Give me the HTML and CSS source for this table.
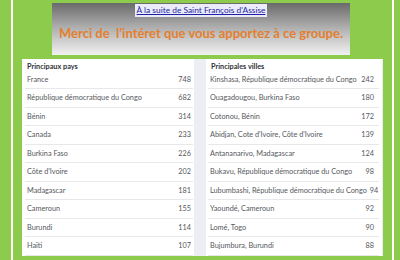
FILE: index.html
```html
<!DOCTYPE html>
<html lang="fr">
<head>
<meta charset="utf-8">
<link rel="stylesheet" href="styles.css">
</head>
<body>
<div class="frame">
  <div class="banner">
    <a class="link" href="#">À la suite de Saint François d'Assise</a>
    <div class="thanks">Merci de&nbsp; l’intéret que vous apportez à ce groupe.</div>
  </div>
  <div class="panel">
    <div class="card card-left">
      <div class="head">Principaux pays</div>
      <div class="row"><span>France</span><span>748</span></div>
      <div class="row"><span>République démocratique du Congo</span><span>682</span></div>
      <div class="row"><span>Bénin</span><span>314</span></div>
      <div class="row"><span>Canada</span><span>233</span></div>
      <div class="row"><span>Burkina Faso</span><span>226</span></div>
      <div class="row"><span>Côte d'Ivoire</span><span>202</span></div>
      <div class="row"><span>Madagascar</span><span>181</span></div>
      <div class="row"><span>Cameroun</span><span>155</span></div>
      <div class="row"><span>Burundi</span><span>114</span></div>
      <div class="row"><span>Haïti</span><span>107</span></div>
    </div>
    <div class="card card-right">
      <div class="head">Principales villes</div>
      <div class="row"><span>Kinshasa, République démocratique du Congo</span><span>242</span></div>
      <div class="row"><span>Ouagadougou, Burkina Faso</span><span>180</span></div>
      <div class="row"><span>Cotonou, Bénin</span><span>172</span></div>
      <div class="row"><span>Abidjan, Cote d'Ivoire, Côte d'Ivoire</span><span>139</span></div>
      <div class="row"><span>Antananarivo, Madagascar</span><span>124</span></div>
      <div class="row"><span>Bukavu, République démocratique du Congo</span><span>98</span></div>
      <div class="row"><span>Lubumbashi, République démocratique du Congo</span><span>94</span></div>
      <div class="row"><span>Yaoundé, Cameroun</span><span>92</span></div>
      <div class="row"><span>Lomé, Togo</span><span>90</span></div>
      <div class="row"><span>Bujumbura, Burundi</span><span>88</span></div>
    </div>
  </div>
</div>
</body>
</html>
```
FILE: styles.css
```css
html, body {
  margin: 0;
  padding: 0;
}
body {
  width: 400px;
  height: 260px;
  overflow: hidden;
  background: #8ccb4c;
  font-family: Lato, "Open Sans", sans-serif;
}
.frame {
  margin-left: 11px;
  width: 361px;
  height: 257px;
  border-left: 2px solid #ffffff;
  border-right: 2px solid #ffffff;
  padding: 3px 9px 0 9px;
}
.banner {
  margin: 0 33px 0 30px;
  height: 52px;
  background: linear-gradient(to bottom, #6a6a6a 0%, #acacac 45%, #f1f1f1 100%);
  display: flex;
  flex-direction: column;
  align-items: center;
}
.link {
  margin-top: 1px;
  padding: 0 2px;
  height: 13px;
  line-height: 13px;
  font-size: 8.4px;
  color: #1d1fa8;
  background: #ecebfa;
  text-decoration: underline;
}
.thanks {
  margin-top: 8px;
  font-size: 13px;
  font-weight: 700;
  color: #e3802f;
  line-height: 16px;
}
.panel {
  margin-top: 4px;
  height: 197px;
  background: #eceef3;
  display: grid;
  grid-template-columns: 172px 176px;
  column-gap: 12px;
  padding-right: 1px;
  overflow: hidden;
}
.card {
  background: #ffffff;
  font-size: 7.3px;
  color: #55585d;
}
.head {
  padding: 2.5px 0 0 5px;
  height: 9px;
  line-height: 9px;
  font-weight: 700;
  color: #303236;
}
.row {
  display: flex;
  justify-content: space-between;
  align-items: center;
  gap: 3px;
  height: 17.5px;
  border-bottom: 1px solid #e6e8ec;
  white-space: nowrap;
}
.card-left .row {
  margin: 0 1px 0 3px;
  padding: 0 2px;
}
.card-right .row {
  margin: 0 3px 0 2px;
  padding: 0 5px 0 2px;
}
```
